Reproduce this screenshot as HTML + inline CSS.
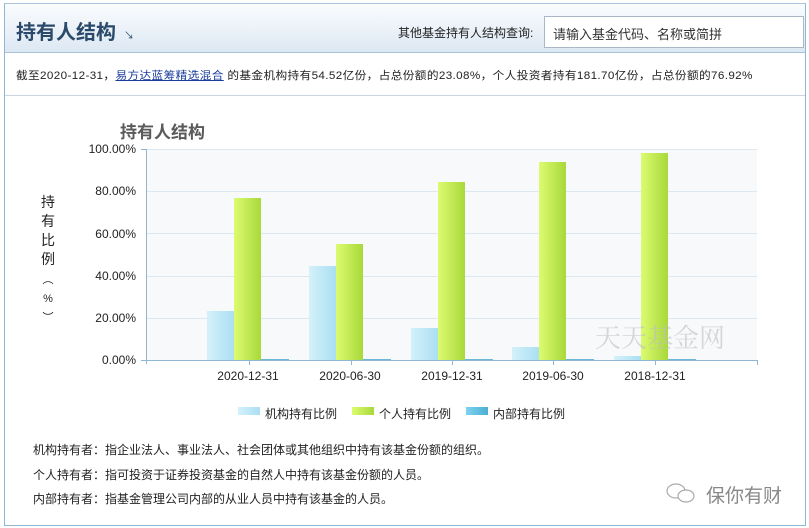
<!DOCTYPE html>
<html><head><meta charset="utf-8"><style>
*{margin:0;padding:0;box-sizing:border-box}
body{width:809px;height:528px;background:#fff;font-family:"Liberation Sans","Noto Sans CJK SC",sans-serif;position:relative;overflow:hidden}
.a{position:absolute}
.t{font-size:12px;color:#222;white-space:nowrap}
.b{position:absolute;background:linear-gradient(90deg,#d4f1fa,#aadff2)}
.g{position:absolute;background:linear-gradient(90deg,#dcfb70,#a8d93a)}
.i{position:absolute;background:#6bb9d8}
.grid{position:absolute;left:147px;width:610px;height:1px;background:#dde7ef}
.yl{position:absolute;left:70px;width:66px;text-align:right;font-size:12px;color:#222}
.xl{position:absolute;top:369px;font-size:12px;color:#222;width:80px;text-align:center}
</style></head><body>
<div class="a" style="left:4px;top:3px;width:802px;height:523px;border:1px solid #8fb6d2;border-top-color:#a9c4d8"></div>
<div class="a" style="left:5px;top:4px;width:800px;height:49px;background:linear-gradient(#fafcfe,#dde8f3);border-bottom:1px solid #a9c4d8"></div>
<div class="a" style="left:16px;top:16px;font-size:20px;font-weight:bold;color:#2b4a6b">持有人结构</div>
<div class="a" style="left:124px;top:27px;font-size:10px;color:#2b4a6b">↘</div>
<div class="a t" style="left:398px;top:24px;font-size:12px">其他基金持有人结构查询:</div>
<div class="a" style="left:544px;top:16px;width:260px;height:32px;background:#fff;border:1px solid #aab8c6"></div>
<div class="a t" style="left:553px;top:24px;font-size:13px;color:#333">请输入基金代码、名称或简拼</div>
<div class="a" style="left:5px;top:95px;width:800px;height:1px;background:#c9d6e2"></div>
<div class="a t" style="left:16px;top:67px;font-size:11px;letter-spacing:0.35px;transform:scaleX(1.06);transform-origin:left">截至2020-12-31，<span style="color:#1a3d9c;text-decoration:underline">易方达蓝筹精选混合</span> 的基金机构持有54.52亿份，占总份额的23.08%，个人投资者持有181.70亿份，占总份额的76.92%</div>

<div class="a" style="left:120px;top:118px;font-size:17px;font-weight:bold;color:#5a5a5a">持有人结构</div>
<div class="a" style="left:147px;top:149px;width:610px;height:211px;background:#f7f9fb"></div>
<div class="grid" style="top:149px"></div><div class="grid" style="top:191px"></div><div class="grid" style="top:233px"></div><div class="grid" style="top:276px"></div><div class="grid" style="top:318px"></div>
<div class="yl" style="top:142px">100.00%</div><div class="yl" style="top:184px">80.00%</div><div class="yl" style="top:227px">60.00%</div><div class="yl" style="top:269px">40.00%</div><div class="yl" style="top:311px">20.00%</div><div class="yl" style="top:353px">0.00%</div>
<div class="a" style="left:41px;top:193px;width:14px;font-size:14px;line-height:19px;color:#222;text-align:center">持<br>有<br>比<br>例<br><span style="font-size:11px;line-height:14px">︵<br>%<br>︶</span></div>

<div class="b" style="left:207px;top:311px;width:27px;height:49px"></div><div class="g" style="left:234px;top:198px;width:27px;height:162px"></div><div class="i" style="left:261px;top:359px;width:28px;height:1px"></div>
<div class="b" style="left:309px;top:266px;width:27px;height:94px"></div><div class="g" style="left:336px;top:244px;width:27px;height:116px"></div><div class="i" style="left:363px;top:359px;width:28px;height:1px"></div>
<div class="b" style="left:411px;top:328px;width:27px;height:32px"></div><div class="g" style="left:438px;top:182px;width:27px;height:178px"></div><div class="i" style="left:465px;top:359px;width:28px;height:1px"></div>
<div class="b" style="left:512px;top:347px;width:27px;height:13px"></div><div class="g" style="left:539px;top:162px;width:27px;height:198px"></div><div class="i" style="left:566px;top:359px;width:28px;height:1px"></div>
<div class="b" style="left:614px;top:356px;width:27px;height:4px"></div><div class="g" style="left:641px;top:153px;width:27px;height:207px"></div><div class="i" style="left:668px;top:359px;width:28px;height:1px"></div>
<div class="a" style="left:595px;top:318px;font-size:26px;color:rgba(190,190,190,0.6);font-family:'Liberation Serif','Noto Serif CJK SC',serif">天天基金网</div>

<div class="a" style="left:146px;top:149px;width:1px;height:215px;background:#8fb6d2"></div>
<div class="a" style="left:141px;top:360px;width:617px;height:1px;background:#8fb6d2"></div>
<div class="a" style="left:141px;top:149px;width:6px;height:1px;background:#8fb6d2"></div>
<div class="a" style="left:249px;top:360px;width:1px;height:5px;background:#8fb6d2"></div>
<div class="a" style="left:351px;top:360px;width:1px;height:5px;background:#8fb6d2"></div>
<div class="a" style="left:452px;top:360px;width:1px;height:5px;background:#8fb6d2"></div>
<div class="a" style="left:553px;top:360px;width:1px;height:5px;background:#8fb6d2"></div>
<div class="a" style="left:655px;top:360px;width:1px;height:5px;background:#8fb6d2"></div>
<div class="a" style="left:757px;top:360px;width:1px;height:5px;background:#8fb6d2"></div>
<div class="xl" style="left:208px">2020-12-31</div><div class="xl" style="left:310px">2020-06-30</div><div class="xl" style="left:412px">2019-12-31</div><div class="xl" style="left:513px">2019-06-30</div><div class="xl" style="left:615px">2018-12-31</div>

<div class="b" style="left:238px;top:407px;width:22px;height:8px"></div><div class="a t" style="left:265px;top:405px">机构持有比例</div>
<div class="g" style="left:352px;top:407px;width:22px;height:8px"></div><div class="a t" style="left:379px;top:405px">个人持有比例</div>
<div class="i" style="left:466px;top:407px;width:22px;height:8px;background:linear-gradient(90deg,#7fd3ef,#4aaed3)"></div><div class="a t" style="left:493px;top:405px">内部持有比例</div>

<div class="a t" style="left:33px;top:441px">机构持有者：指企业法人、事业法人、社会团体或其他组织中持有该基金份额的组织。</div>
<div class="a t" style="left:33px;top:466px">个人持有者：指可投资于证券投资基金的自然人中持有该基金份额的人员。</div>
<div class="a t" style="left:33px;top:490px">内部持有者：指基金管理公司内部的从业人员中持有该基金的人员。</div>
<svg class="a" style="left:664px;top:480px" width="34" height="26"><ellipse cx="12" cy="11" rx="9" ry="7" fill="none" stroke="#aaa" stroke-width="1.2"/><ellipse cx="22" cy="16" rx="8" ry="6" fill="#fff" stroke="#aaa" stroke-width="1.2"/></svg>
<div class="a" style="left:706px;top:481px;font-size:19px;color:#888">保你有财</div>
</body></html>
